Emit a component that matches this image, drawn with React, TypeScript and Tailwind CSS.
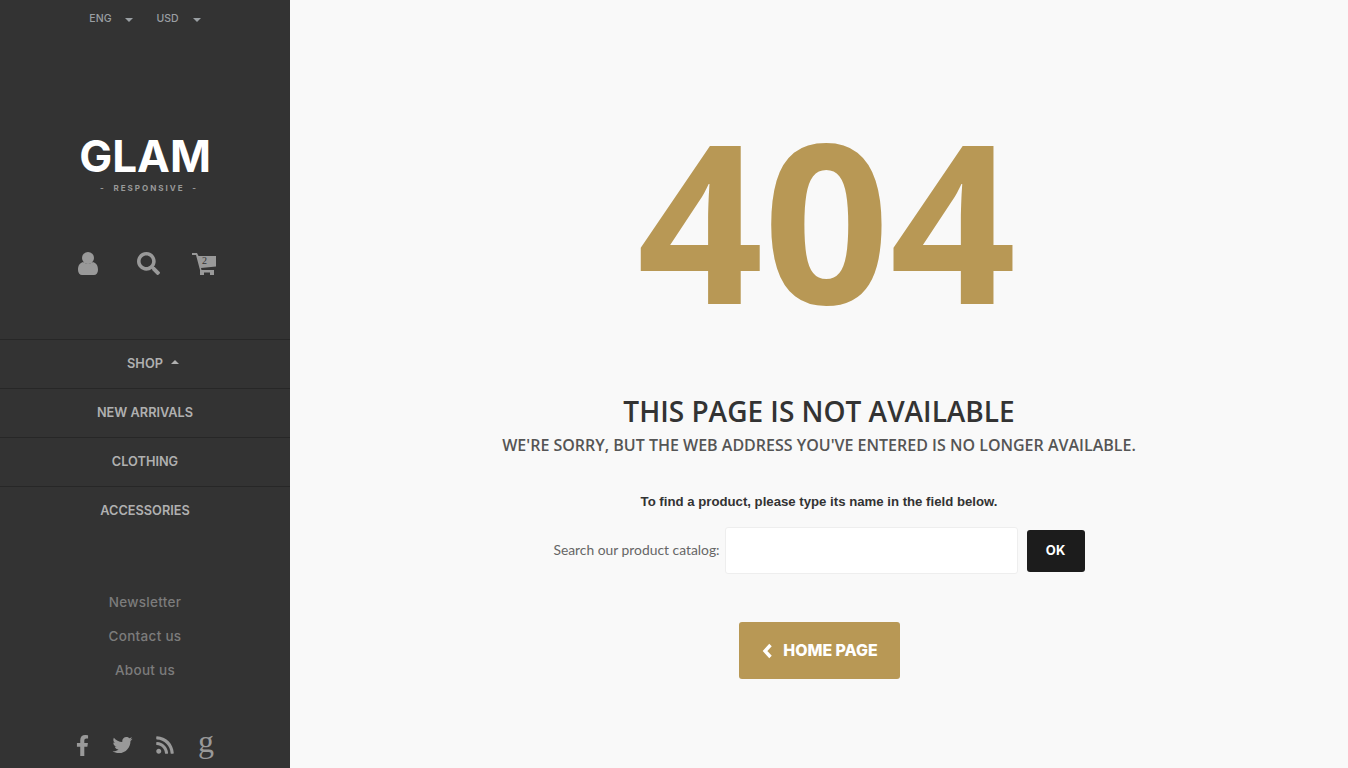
import { FaSearch, FaFacebookF, FaTwitter, FaRss } from "react-icons/fa";

const nav = ["NEW ARRIVALS", "CLOTHING", "ACCESSORIES"];
const links = ["Newsletter", "Contact us", "About us"];

function Caret({ up = false, className = "" }: { up?: boolean; className?: string }) {
  return (
    <svg width="8" height="4" viewBox="0 0 8 4" className={className}>
      <path d={up ? "M0 4 L4 0 L8 4Z" : "M0 0 L8 0 L4 4Z"} fill="currentColor" />
    </svg>
  );
}

export default function App() {
  return (
    <div className="flex h-[768px] w-full overflow-hidden bg-[#f9f9f9] font-['Inter',sans-serif]">
      <aside className="flex w-[290px] shrink-0 flex-col items-stretch bg-[#333333]">
        <div className="flex h-[37px] items-center justify-center text-[10.5px] font-medium text-[#9a9fa3]">
          <span>ENG</span>
          <Caret className="ml-[14px] mt-[2px]" />
          <span className="ml-[23px]">USD</span>
          <Caret className="ml-[14px] mt-[2px]" />
        </div>
        <div className="mt-[97px] flex flex-col items-center">
          <div className="text-[44px] font-bold leading-[44px] tracking-[0px] text-white">GLAM</div>
          <div className="mt-[5px] pl-[8px] text-[8px] font-bold leading-[10px] tracking-[2px] text-[#999999] whitespace-pre">-  RESPONSIVE  -</div>
        </div>
        <div className="mt-[59px] flex h-[23px] items-center pl-[78px] text-[#999999]">
          <svg width="20" height="23" viewBox="0 0 20 23" fill="currentColor">
            <circle cx="10" cy="6" r="6" />
            <path d="M0 18c0-5 2-7 5-8 3 2 7 2 10 0 3 1 5 3 5 8 0 3-2 5-4 5H4c-2 0-4-2-4-5z" />
          </svg>
          <FaSearch className="ml-[39px] h-[23px] w-[23px]" />
          <div className="relative ml-[32px] h-[22px] w-[25px]">
            <svg width="25" height="22" viewBox="0 0 25 22" fill="currentColor">
              <path d="M0 0h5l1.5 3H24v10.5L9 15l.5 2H22v5h-4v-2.5h-6V22H8v-5L4 2H0z" />
            </svg>
            <span className="absolute left-[10px] top-[2px] font-['Liberation_Serif',serif] text-[10px] leading-[12px] text-[#333333]">2</span>
          </div>
        </div>
        <nav className="mt-[64px] flex flex-col text-[12.75px] font-semibold text-[#b0b0b0]">
          <div className="flex h-[49px] items-center justify-center border-t border-[#272727]">
            <span className="relative">
              SHOP
              <Caret up className="absolute right-[-16px] top-[6px]" />
            </span>
          </div>
          {nav.map((n) => (
            <div key={n} className="flex h-[49px] items-center justify-center border-t border-[#272727]">
              {n}
            </div>
          ))}
        </nav>
        <div className="mt-[50px] flex flex-col items-center text-[13.5px] font-medium leading-[34px] tracking-[0.3px] text-[#7c7c7c]">
          {links.map((l) => (
            <div key={l}>{l}</div>
          ))}
        </div>
        <div className="mt-[45px] flex h-[26px] items-center pl-[76px] text-[#999999]">
          <FaFacebookF className="h-[21px] w-[13px]" />
          <FaTwitter className="ml-[23px] h-[20px] w-[21px]" />
          <FaRss className="ml-[22px] h-[20px] w-[20px]" />
          <span className="ml-[23px] mt-[-8px] font-['Liberation_Serif',serif] text-[32px] leading-[26px]">g</span>
        </div>
      </aside>
      <main className="flex flex-1 flex-col items-center">
        <div className="mt-[99px] pl-[15px] font-['Open_Sans',sans-serif] text-[221px] font-bold leading-[240px] tracking-[0px] text-[#b89855]">404</div>
        <h1 className="mt-[54px] font-['Open_Sans',sans-serif] text-[28px] font-semibold leading-[36px] text-[#333333]">THIS PAGE IS NOT AVAILABLE</h1>
        <h2 className="mt-[5px] font-['Open_Sans',sans-serif] text-[16px] font-semibold leading-[22px] text-[#555555]">WE'RE SORRY, BUT THE WEB ADDRESS YOU'VE ENTERED IS NO LONGER AVAILABLE.</h2>
        <p className="mt-[36px] font-['Liberation_Sans',sans-serif] text-[13.2px] font-bold leading-[20px] text-[#333333]">To find a product, please type its name in the field below.</p>
        <form className="mt-[15px] flex items-center">
          <label className="mr-[5px] font-['Lato',sans-serif] text-[13.85px] text-[#666666]">Search our product catalog:</label>
          <input className="h-[47px] w-[293px] rounded-[3px] border border-[#eeeeee] bg-white" />
          <button type="button" className="ml-[9px] h-[42px] w-[58px] rounded-[3px] bg-[#1c1c1c] text-[13px] font-bold text-white">OK</button>
        </form>
        <a className="mt-[48px] flex h-[57px] w-[161px] items-center justify-center rounded-[3px] bg-[#b89855] pl-[2px] text-[15.9px] font-extrabold text-white">
          <svg width="11" height="16" viewBox="0 0 11 16" className="mr-[10px]">
            <path d="M8.5 2 L3 8 L8.5 14" fill="none" stroke="currentColor" strokeWidth="3.4" />
          </svg>
          HOME PAGE
        </a>
      </main>
    </div>
  );
}
